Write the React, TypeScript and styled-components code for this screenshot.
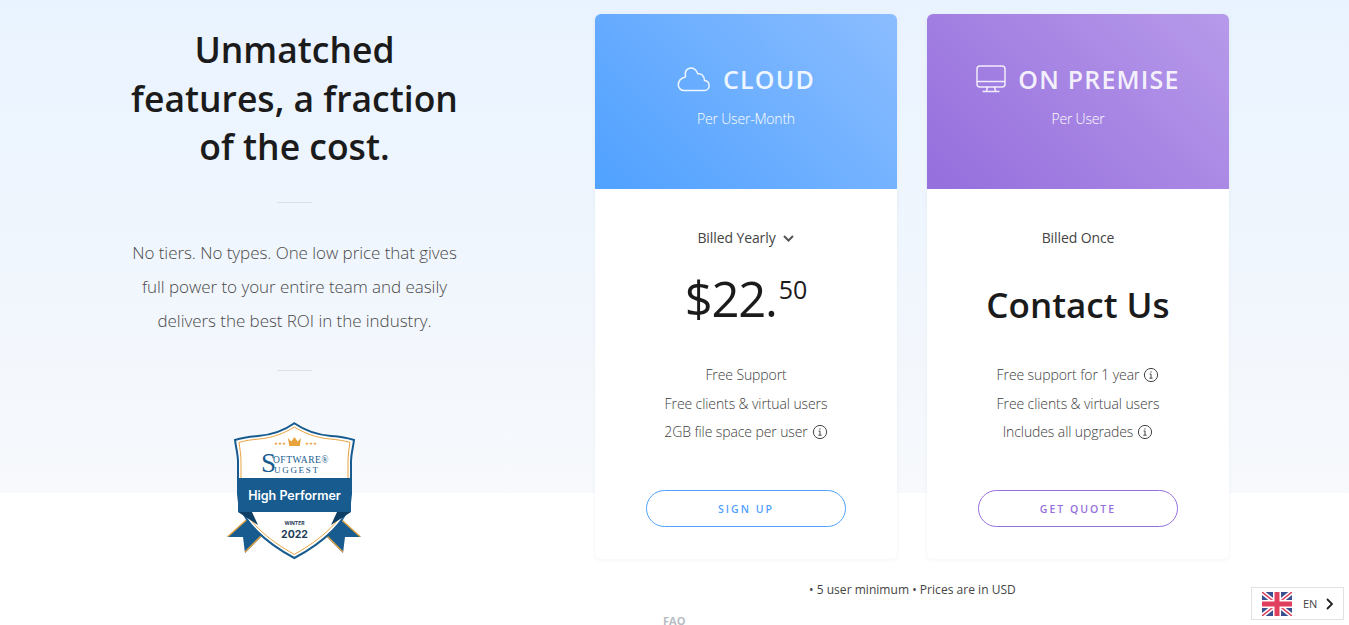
import React from "react";
import styled, { createGlobalStyle } from "styled-components";

const Global = createGlobalStyle`
  html, body { margin: 0; padding: 0; height: 100%; overflow: hidden; background: #fff; }
  body { font-family: "Open Sans", "Noto Sans", "Liberation Sans", sans-serif; color: #1c1c1c; }
`;

const Page = styled.div`
  height: 625px;
  overflow: hidden;
  background: linear-gradient(180deg, #e9f3ff 0%, #f7f9fc 100%) 0 0 / 100% 493px no-repeat;
`;
const Top = styled.div`
  display: flex;
  align-items: flex-start;
  height: 545px;
  padding: 14px 0 0 130px;
`;
const Intro = styled.section`
  width: 329px;
  margin-right: 136px;
  display: flex;
  flex-direction: column;
  align-items: center;
  text-align: center;
`;
const Heading = styled.h1`
  margin: 11px 0 0;
  font-size: 35.5px;
  line-height: 48.5px;
  font-weight: 600;
  color: #1b1b1b;
  white-space: nowrap;
`;
const Rule = styled.hr<{ $top: number }>`
  width: 35px;
  height: 1px;
  border: 0;
  margin: ${(p) => p.$top}px 0 0;
  background: #dcdfe3;
`;
const Lead = styled.p`
  margin: 33px 0 0;
  font-size: 17px;
  line-height: 34px;
  font-weight: 300;
  letter-spacing: -0.05px;
  color: #4a4a4a;
  white-space: nowrap;
`;
const BadgeWrap = styled.div`
  margin-top: 49px;
  width: 140px;
  height: 140px;
`;
const Cards = styled.div`
  display: flex;
  gap: 30px;
`;
const Card = styled.article`
  width: 302px;
  height: 545px;
  background: #fff;
  border-radius: 6px;
  box-shadow: 0 1px 4px rgba(40, 60, 90, 0.06);
  display: flex;
  flex-direction: column;
  align-items: center;
  overflow: hidden;
`;
const CardHead = styled.header<{ $from: string; $to: string }>`
  width: 100%;
  height: 175px;
  background: linear-gradient(225deg, ${(p) => p.$to}, ${(p) => p.$from} 95%);
  color: rgba(255, 255, 255, 0.9);
  display: flex;
  flex-direction: column;
  align-items: center;
`;
const PlanRow = styled.div`
  margin-top: 46px;
  height: 38px;
  display: flex;
  align-items: center;
  gap: 12px;
`;
const PlanName = styled.h2`
  margin: 0;
  font-size: 25px;
  line-height: 38px;
  font-weight: 600;
  letter-spacing: 1.2px;
`;
const PlanNote = styled.div`
  margin-top: 11px;
  font-size: 14px;
  line-height: 20px;
  font-weight: 300;
  letter-spacing: -0.2px;
  color: #fff;
`;
const Billing = styled.div`
  margin-top: 38px;
  height: 22px;
  font-size: 14px;
  line-height: 22px;
  letter-spacing: -0.1px;
  color: #444;
  display: flex;
  align-items: center;
  gap: 6px;
`;
const Price = styled.div`
  margin-top: 19px;
  height: 74px;
  font-size: 49px;
  line-height: 60px;
  font-weight: 500;
  letter-spacing: -1.2px;
  color: #1b1b1b;
  display: flex;
`;
const Cents = styled.span`
  font-size: 25px;
  line-height: 24px;
  margin: 9px 0 0 2px;
  letter-spacing: 0;
  font-weight: 500;
`;
const ContactPrice = styled(Price)`
  font-size: 35px;
  line-height: 74px;
  font-weight: 600;
  letter-spacing: 0;
`;
const Features = styled.ul`
  list-style: none;
  margin: 19px 0 0;
  padding: 0;
  text-align: center;
  font-size: 14px;
  line-height: 28.5px;
  font-weight: 300;
  letter-spacing: -0.1px;
  color: #3d3d3d;
`;
const Feature = styled.li`
  display: flex;
  align-items: center;
  justify-content: center;
  gap: 4px;
`;
const CTA = styled.a<{ $color: string }>`
  margin-top: 43px;
  width: 200px;
  height: 37px;
  box-sizing: border-box;
  padding-top: 1px;
  border: 1px solid ${(p) => p.$color};
  border-radius: 19px;
  color: ${(p) => p.$color};
  font-size: 10.5px;
  font-weight: 600;
  letter-spacing: 2px;
  display: flex;
  align-items: center;
  justify-content: center;
`;
const Footnote = styled.div`
  margin: 22px 0 0 809px;
  font-size: 12px;
  line-height: 18px;
  letter-spacing: 0.03px;
  color: #444;
  white-space: nowrap;
`;
const Faq = styled.div`
  margin: 17px 0 0 663px;
  font-size: 11px;
  line-height: 9px;
  font-weight: 700;
  color: #b9bdc3;
`;
const Lang = styled.div`
  position: fixed;
  left: 1251px;
  top: 587px;
  width: 93px;
  height: 33px;
  box-sizing: border-box;
  border: 1px solid #e2e2e2;
  background: #fff;
  display: flex;
  align-items: center;
  padding-left: 10px;
  font-size: 11px;
  color: #444;
`;
const LangText = styled.span`
  margin: 0 8px 0 11px;
`;

const Info = () => (
  <svg width="16" height="16" viewBox="0 0 16 16" fill="none" stroke="#444" strokeWidth="1">
    <circle cx="8" cy="8" r="6.6" />
    <path d="M8 7v4M6.6 7H8M6.4 11.2h3.2" />
    <circle cx="8" cy="4.9" r="0.7" fill="#444" stroke="none" />
  </svg>
);

const Cloud = () => (
  <svg width="34" height="26" viewBox="0 0 34 26" fill="none" stroke="rgba(255,255,255,.9)" strokeWidth="1.5" strokeLinejoin="round">
    <path d="M7 24.5h20.5c2.6 0 4.6-2.2 4.6-4.8 0-2.8-2-4.9-4.6-5.1C27.3 9.6 24 7 20.8 7.8 19.4 3.6 15.6 1 12.400 2.200 9 3.300 7.800 7 8.600 10.800 4.400 12 1.300 15 1.300 19c0 3 2.500 5.500 5.700 5.500z" />
  </svg>
);

const Monitor = () => (
  <svg width="30" height="28" viewBox="0 0 30 28" fill="none" stroke="rgba(255,255,255,.85)" strokeWidth="1.5" strokeLinejoin="round">
    <rect x="1" y="1" width="28" height="21" rx="3" />
    <path d="M1 16.500h28M11.500 22l-1 4M18.500 22l1 4M6.500 26.500h17" />
  </svg>
);

const Chevron = () => (
  <svg width="13" height="12" viewBox="0 0 13 12" fill="none" stroke="#555" strokeWidth="2">
    <path d="M2 4l4.500 4.500L11 4" />
  </svg>
);

const Flag = () => (
  <svg width="30" height="24" viewBox="0 0 30 24">
    <rect width="30" height="24" fill="#3a4f8f" />
    <path d="M0 0l30 24M30 0L0 24" stroke="#fff" strokeWidth="4.500" />
    <path d="M0 0l30 24M30 0L0 24" stroke="#e0405e" strokeWidth="1.500" />
    <path d="M15 0v24M0 12h30" stroke="#fff" strokeWidth="8" />
    <path d="M15 0v24M0 12h30" stroke="#e0405e" strokeWidth="5" />
  </svg>
);

const LangChevron = () => (
  <svg width="10" height="14" viewBox="0 0 10 14" fill="none" stroke="#222" strokeWidth="1.800">
    <path d="M2 2l5 5-5 5" />
  </svg>
);

const Badge = () => (
  <svg width="140" height="140" viewBox="0 0 140 140">
    <path d="M23 98L2 117h16l2 16 20-20z" fill="#175b8f" />
    <path d="M115 98l21 19h-16l-2 16-20-20z" fill="#175b8f" />
    <path d="M3 116.500l20-18M20 132l18-18M135 116.500l-20-18M118 132l-18-18" stroke="#e8a33d" strokeWidth="1.300" fill="none" />
    <path d="M69.300 3.300C60 10 46 15 33 16c-9 .6-17 2-23 4 1 8 3 14 3 22v32c0 26 30 50 56.300 64C96 124 126 100 126 74V42c0-8 2-14 3-22-6-2-14-3.400-23-4-13-1-27-6-36.700-12.700z" fill="#fff" stroke="#175b8f" strokeWidth="2" />
    <path d="M69.300 7C60 13 47 18 34 19c-7 .6-14 1.600-20 3.400 1 7 2 13 2 20v32c0 24 28 46 53.300 60C95 120 123 98 123 74V42c0-7 1-13 2-19.600-6-1.800-13-2.800-20-3.400-13-1-26-6-35.700-12z" fill="#fff" stroke="#e8a33d" strokeWidth="1" />
    <path d="M63 18l3.300 3.500L69.500 17l3.200 4.500L76 18l-1.200 8H64.200z" fill="#e8a33d" />
    <text x="55" y="25" fontSize="4.500" fill="#e8a33d" textAnchor="middle" fontFamily="DejaVu Sans">★★★</text>
    <text x="86" y="25" fontSize="4.500" fill="#e8a33d" textAnchor="middle" fontFamily="DejaVu Sans">★★★</text>
    <text x="36" y="52" fontSize="27" fill="#175b8f" fontFamily="Liberation Serif">S</text>
    <text x="48" y="43" fontSize="9.500" letterSpacing="0.5" fill="#175b8f" fontFamily="Liberation Serif">OFTWARE®</text>
    <text x="49" y="52.500" fontSize="9" letterSpacing="1.700" fill="#175b8f" fontFamily="Liberation Serif">UGGEST</text>
    <path d="M13 58h113v34H13z" fill="#175b8f" />
    <path d="M13 92h14l6 13zM126 92h-14l-6 13z" fill="#0d3f66" />
    <text x="69.500" y="80" textAnchor="middle" fontSize="12.500" fontWeight="600" fill="#fff" fontFamily="Inter, sans-serif">High Performer</text>
    <text x="69.500" y="104.500" textAnchor="middle" fontSize="5" fontWeight="700" fill="#1d3c58" fontFamily="Inter, sans-serif">WINTER</text>
    <text x="69.500" y="117.500" textAnchor="middle" fontSize="10.500" fontWeight="700" fill="#1d3c58" fontFamily="Inter, sans-serif">2022</text>
  </svg>
);

export default function App() {
  return (
    <Page>
      <Global />
      <Top>
        <Intro>
          <Heading>
            Unmatched
            <br />
            features, a fraction
            <br />
            of the cost.
          </Heading>
          <Rule $top={31} />
          <Lead>
            No tiers. No types. One low price that gives
            <br />
            full power to your entire team and easily
            <br />
            delivers the best ROI in the industry.
          </Lead>
          <Rule $top={32} />
          <BadgeWrap>
            <Badge />
          </BadgeWrap>
        </Intro>
        <Cards>
          <Card>
            <CardHead $from="#52a2ff" $to="#8bbdff">
              <PlanRow>
                <Cloud />
                <PlanName>CLOUD</PlanName>
              </PlanRow>
              <PlanNote>Per User-Month</PlanNote>
            </CardHead>
            <Billing>
              Billed Yearly <Chevron />
            </Billing>
            <Price>
              $22.<Cents>50</Cents>
            </Price>
            <Features>
              <Feature>Free Support</Feature>
              <Feature>Free clients &amp; virtual users</Feature>
              <Feature>
                2GB file space per user <Info />
              </Feature>
            </Features>
            <CTA $color="#52a2ff">SIGN UP</CTA>
          </Card>
          <Card>
            <CardHead $from="#9670dd" $to="#b79aea">
              <PlanRow>
                <Monitor />
                <PlanName>ON PREMISE</PlanName>
              </PlanRow>
              <PlanNote>Per User</PlanNote>
            </CardHead>
            <Billing>Billed Once</Billing>
            <ContactPrice>Contact Us</ContactPrice>
            <Features>
              <Feature>
                Free support for 1 year <Info />
              </Feature>
              <Feature>Free clients &amp; virtual users</Feature>
              <Feature>
                Includes all upgrades <Info />
              </Feature>
            </Features>
            <CTA $color="#9670dd">GET QUOTE</CTA>
          </Card>
        </Cards>
      </Top>
      <Footnote>• 5 user minimum • Prices are in USD</Footnote>
      <Faq>FAQ</Faq>
      <Lang>
        <Flag />
        <LangText>EN</LangText>
        <LangChevron />
      </Lang>
    </Page>
  );
}
